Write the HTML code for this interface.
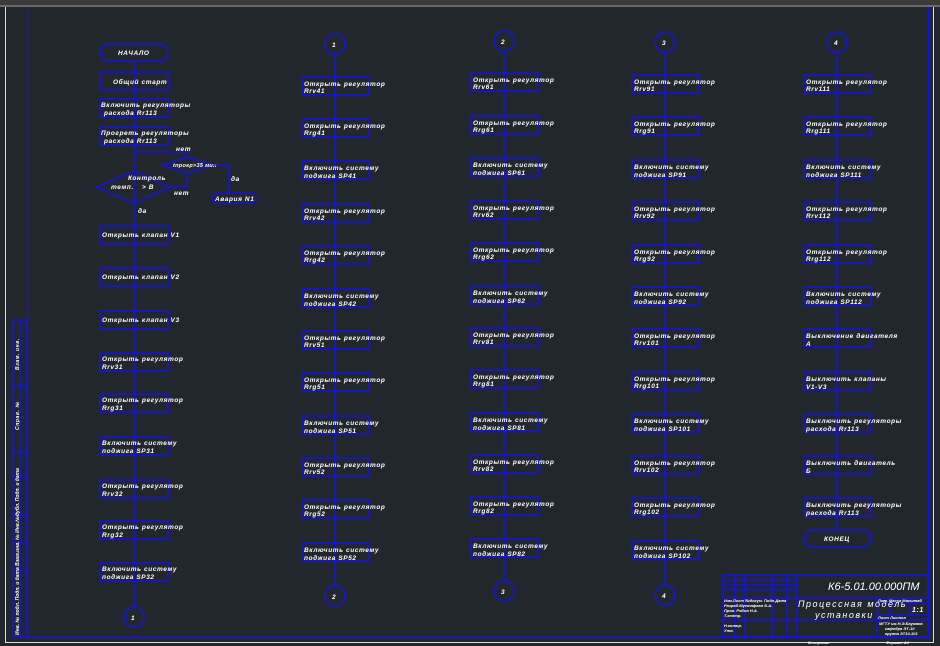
<!DOCTYPE html><html><head><meta charset="utf-8"><style>
html,body{margin:0;padding:0;background:#22272e;width:940px;height:646px;overflow:hidden}
svg{display:block}
text{font-family:"Liberation Sans",sans-serif;font-style:italic;font-weight:bold;fill:#fff;font-size:6.5px;letter-spacing:0.6px}
.b{fill:none;stroke:#1010ff;stroke-width:1.3}
.l{stroke:#1010ff;stroke-width:1.3}
</style></head><body>
<svg width="940" height="646" viewBox="0 0 940 646">
<rect x="0" y="0" width="940" height="5" fill="#3a3a3a"/><rect x="0" y="5" width="940" height="2" fill="#6a6a6a"/>
<line x1="5.5" y1="7" x2="5.5" y2="643" stroke="#ddd"/><line x1="5" y1="642.5" x2="934" y2="642.5" stroke="#ddd"/><line x1="933.5" y1="7" x2="933.5" y2="643" stroke="#ddd"/>
<line x1="27.5" y1="7" x2="27.5" y2="637" class="l"/><line x1="27" y1="637.5" x2="928" y2="637.5" class="l"/><line x1="928.5" y1="7" x2="928.5" y2="637" class="l"/>
<rect x="13" y="320" width="14" height="317" class="b"/><line x1="20" y1="320" x2="20" y2="637" class="l"/>
<line x1="13" y1="386" x2="27" y2="386" class="l"/><line x1="13" y1="452" x2="27" y2="452" class="l"/><line x1="13" y1="477" x2="27" y2="477" class="l"/><line x1="13" y1="515" x2="27" y2="515" class="l"/><line x1="13" y1="543" x2="27" y2="543" class="l"/><line x1="13" y1="570" x2="27" y2="570" class="l"/>
<text transform="translate(19,370) rotate(-90)" style="font-size:5px">Взам. инв.</text>
<text transform="translate(19,430) rotate(-90)" style="font-size:5px">Справ. №</text>
<text transform="translate(19,635) rotate(-90)" style="font-size:5px;letter-spacing:0">Инв. № подл. Подп. и дата Взам.инв. № Инв.№дубл. Подп. и дата</text>

<line x1="134" y1="62" x2="134" y2="606" class="l"/>
<rect x="100" y="44" width="68" height="17" rx="8.5" class="b" fill="#22272e"/><text x="118" y="55">НАЧАЛО</text>
<rect x="100" y="72" width="68" height="18" class="b" fill="#22272e"/><text x="113" y="84">Общий старт</text>
<rect x="100" y="99" width="68" height="18" class="b" fill="#22272e"/><text x="101" y="107">Включить регуляторы</text><text x="104" y="115">расхода Rr113</text>
<rect x="100" y="127" width="68" height="18" class="b" fill="#22272e"/><text x="101" y="135">Прогреть регуляторы</text><text x="104" y="143">расхода Rr113</text>
<polyline points="134,152 187,152 187,158" class="b"/>
<polygon points="162,165 187,157 213,165 187,173" class="b" fill="#22272e"/><text x="173" y="167" style="font-size:5.5px;letter-spacing:0.3px">tпрогр&gt;35 мин</text>
<text x="176" y="151">нет</text>
<polyline points="213,165 229,165 229,193" class="b"/><text x="231" y="181">да</text>
<rect x="212" y="193" width="44" height="10" rx="5" class="b"/><text x="215" y="201">Авария N1</text>
<polygon points="96,187 134,171 170,187 134,203" class="b" fill="#22272e"/><text x="128" y="180">Контроль</text><text x="111" y="189">темп.</text><text x="142" y="189">&gt; В</text>
<polyline points="170,187 187,187 187,173" class="b"/><text x="174" y="195">нет</text><text x="138" y="213">да</text>
<g fill="#22272e">
<rect x="100" y="226" width="68" height="18" class="b"/><rect x="100" y="268" width="68" height="18" class="b"/><rect x="100" y="311" width="68" height="18" class="b"/><rect x="100" y="353" width="68" height="18" class="b"/><rect x="100" y="394" width="68" height="18" class="b"/><rect x="100" y="437" width="68" height="18" class="b"/><rect x="100" y="480" width="68" height="18" class="b"/><rect x="100" y="521" width="68" height="18" class="b"/><rect x="100" y="563" width="68" height="18" class="b"/>
</g>
<text x="102" y="237">Открыть клапан V1</text><text x="102" y="279">Открыть клапан V2</text><text x="102" y="322">Открыть клапан V3</text>
<text x="102" y="361">Открыть регулятор</text><text x="102" y="369">Rrv31</text>
<text x="102" y="402">Открыть регулятор</text><text x="102" y="410">Rrg31</text>
<text x="102" y="445">Включить систему</text><text x="102" y="453">поджига SP31</text>
<text x="102" y="488">Открыть регулятор</text><text x="102" y="496">Rrv32</text>
<text x="102" y="529">Открыть регулятор</text><text x="102" y="537">Rrg32</text>
<text x="102" y="571">Включить систему</text><text x="102" y="579">поджига SP32</text>
<circle cx="134" cy="617" r="10" class="b" fill="#22272e"/><text x="131" y="620">1</text>

<line x1="335" y1="54" x2="335" y2="586" class="l"/>
<circle cx="335" cy="44" r="10" class="b"/><text x="332" y="47">1</text>
<circle cx="335" cy="596" r="10" class="b" fill="#22272e"/><text x="332" y="599">2</text>
<g fill="#22272e">
<rect x="302" y="77" width="67" height="18" class="b"/><rect x="302" y="119" width="67" height="18" class="b"/><rect x="302" y="161" width="67" height="18" class="b"/><rect x="302" y="204" width="67" height="18" class="b"/><rect x="302" y="246" width="67" height="18" class="b"/><rect x="302" y="289" width="67" height="18" class="b"/><rect x="302" y="331" width="67" height="18" class="b"/><rect x="302" y="373" width="67" height="18" class="b"/><rect x="302" y="416" width="67" height="18" class="b"/><rect x="302" y="458" width="67" height="18" class="b"/><rect x="302" y="500" width="67" height="18" class="b"/><rect x="302" y="543" width="67" height="18" class="b"/>
</g>
<text x="304" y="86">Открыть регулятор</text><text x="304" y="93">Rrv41</text>
<text x="304" y="128">Открыть регулятор</text><text x="304" y="135">Rrg41</text>
<text x="304" y="170">Включить систему</text><text x="304" y="178">поджига SP41</text>
<text x="304" y="213">Открыть регулятор</text><text x="304" y="220">Rrv42</text>
<text x="304" y="255">Открыть регулятор</text><text x="304" y="262">Rrg42</text>
<text x="304" y="298">Включить систему</text><text x="304" y="306">поджига SP42</text>
<text x="304" y="340">Открыть регулятор</text><text x="304" y="347">Rrv51</text>
<text x="304" y="382">Открыть регулятор</text><text x="304" y="389">Rrg51</text>
<text x="304" y="425">Включить систему</text><text x="304" y="433">поджига SP51</text>
<text x="304" y="467">Открыть регулятор</text><text x="304" y="474">Rrv52</text>
<text x="304" y="509">Открыть регулятор</text><text x="304" y="516">Rrg52</text>
<text x="304" y="552">Включить систему</text><text x="304" y="560">поджига SP52</text>

<line x1="504" y1="51" x2="504" y2="581" class="l"/>
<circle cx="504" cy="41" r="10" class="b"/><text x="501" y="44">2</text>
<circle cx="504" cy="591" r="10" class="b" fill="#22272e"/><text x="501" y="594">3</text>
<g fill="#22272e">
<rect x="471" y="73" width="67" height="18" class="b"/><rect x="471" y="116" width="67" height="18" class="b"/><rect x="471" y="158" width="67" height="18" class="b"/><rect x="471" y="201" width="67" height="18" class="b"/><rect x="471" y="243" width="67" height="18" class="b"/><rect x="471" y="286" width="67" height="18" class="b"/><rect x="471" y="328" width="67" height="18" class="b"/><rect x="471" y="370" width="67" height="18" class="b"/><rect x="471" y="413" width="67" height="18" class="b"/><rect x="471" y="455" width="67" height="18" class="b"/><rect x="471" y="497" width="67" height="18" class="b"/><rect x="471" y="539" width="67" height="18" class="b"/>
</g>
<text x="473" y="82">Открыть регулятор</text><text x="473" y="89">Rrv61</text>
<text x="473" y="125">Открыть регулятор</text><text x="473" y="132">Rrg61</text>
<text x="473" y="167">Включить систему</text><text x="473" y="175">поджига SP61</text>
<text x="473" y="210">Открыть регулятор</text><text x="473" y="217">Rrv62</text>
<text x="473" y="252">Открыть регулятор</text><text x="473" y="259">Rrg62</text>
<text x="473" y="295">Включить систему</text><text x="473" y="303">поджига SP62</text>
<text x="473" y="337">Открыть регулятор</text><text x="473" y="344">Rrv81</text>
<text x="473" y="379">Открыть регулятор</text><text x="473" y="386">Rrg81</text>
<text x="473" y="422">Включить систему</text><text x="473" y="430">поджига SP81</text>
<text x="473" y="464">Открыть регулятор</text><text x="473" y="471">Rrv82</text>
<text x="473" y="506">Открыть регулятор</text><text x="473" y="513">Rrg82</text>
<text x="473" y="548">Включить систему</text><text x="473" y="556">поджига SP82</text>

<line x1="665" y1="52" x2="665" y2="585" class="l"/>
<circle cx="665" cy="42" r="10" class="b"/><text x="662" y="45">3</text>
<circle cx="665" cy="595" r="10" class="b" fill="#22272e"/><text x="662" y="598">4</text>
<g fill="#22272e">
<rect x="632" y="75" width="67" height="18" class="b"/><rect x="632" y="117" width="67" height="18" class="b"/><rect x="632" y="160" width="67" height="18" class="b"/><rect x="632" y="202" width="67" height="18" class="b"/><rect x="632" y="245" width="67" height="18" class="b"/><rect x="632" y="287" width="67" height="18" class="b"/><rect x="632" y="329" width="67" height="18" class="b"/><rect x="632" y="372" width="67" height="18" class="b"/><rect x="632" y="414" width="67" height="18" class="b"/><rect x="632" y="456" width="67" height="18" class="b"/><rect x="632" y="498" width="67" height="18" class="b"/><rect x="632" y="541" width="67" height="18" class="b"/>
</g>
<text x="634" y="84">Открыть регулятор</text><text x="634" y="91">Rrv91</text>
<text x="634" y="126">Открыть регулятор</text><text x="634" y="133">Rrg91</text>
<text x="634" y="169">Включить систему</text><text x="634" y="177">поджига SP91</text>
<text x="634" y="211">Открыть регулятор</text><text x="634" y="218">Rrv92</text>
<text x="634" y="254">Открыть регулятор</text><text x="634" y="261">Rrg92</text>
<text x="634" y="296">Включить систему</text><text x="634" y="304">поджига SP92</text>
<text x="634" y="338">Открыть регулятор</text><text x="634" y="345">Rrv101</text>
<text x="634" y="381">Открыть регулятор</text><text x="634" y="388">Rrg101</text>
<text x="634" y="423">Включить систему</text><text x="634" y="431">поджига SP101</text>
<text x="634" y="465">Открыть регулятор</text><text x="634" y="472">Rrv102</text>
<text x="634" y="507">Открыть регулятор</text><text x="634" y="514">Rrg102</text>
<text x="634" y="550">Включить систему</text><text x="634" y="558">поджига SP102</text>

<line x1="837" y1="52" x2="837" y2="530" class="l"/>
<circle cx="837" cy="42" r="10" class="b"/><text x="834" y="45">4</text>
<g fill="#22272e">
<rect x="804" y="75" width="67" height="18" class="b"/><rect x="804" y="117" width="67" height="18" class="b"/><rect x="804" y="160" width="67" height="18" class="b"/><rect x="804" y="202" width="67" height="18" class="b"/><rect x="804" y="245" width="67" height="18" class="b"/><rect x="804" y="287" width="67" height="18" class="b"/><rect x="804" y="329" width="67" height="18" class="b"/><rect x="804" y="372" width="67" height="18" class="b"/><rect x="804" y="414" width="67" height="18" class="b"/><rect x="804" y="456" width="67" height="18" class="b"/><rect x="804" y="498" width="67" height="18" class="b"/>
<rect x="804" y="530" width="67" height="17" rx="8.5" class="b"/>
</g>
<text x="806" y="84">Открыть регулятор</text><text x="806" y="91">Rrv111</text>
<text x="806" y="126">Открыть регулятор</text><text x="806" y="133">Rrg111</text>
<text x="806" y="169">Включить систему</text><text x="806" y="177">поджига SP111</text>
<text x="806" y="211">Открыть регулятор</text><text x="806" y="218">Rrv112</text>
<text x="806" y="254">Открыть регулятор</text><text x="806" y="261">Rrg112</text>
<text x="806" y="296">Включить систему</text><text x="806" y="304">поджига SP112</text>
<text x="806" y="338">Выключение двигателя</text><text x="806" y="346">А</text>
<text x="806" y="381">Выключить клапаны</text><text x="806" y="389">V1-V3</text>
<text x="806" y="423">Выключить регуляторы</text><text x="806" y="431">расхода Rr113</text>
<text x="806" y="465">Выключить двигатель</text><text x="806" y="473">Б</text>
<text x="806" y="507">Выключить регуляторы</text><text x="806" y="515">расхода Rr113</text>
<text x="824" y="541">КОНЕЦ</text>

<rect x="723" y="575" width="205" height="62" class="b" fill="#22272e"/>
<line x1="723" y1="580" x2="797" y2="580" class="l"/><line x1="723" y1="585" x2="797" y2="585" class="l"/><line x1="723" y1="590" x2="797" y2="590" class="l"/>
<line x1="723" y1="598" x2="928" y2="598" class="l"/><line x1="723" y1="620" x2="928" y2="620" class="l"/>
<line x1="735" y1="575" x2="735" y2="637" class="l"/><line x1="745" y1="575" x2="745" y2="637" class="l"/><line x1="772" y1="575" x2="772" y2="637" class="l"/><line x1="787" y1="575" x2="787" y2="637" class="l"/><line x1="797" y1="575" x2="797" y2="637" class="l"/>
<line x1="877" y1="598" x2="877" y2="637" class="l"/><line x1="877" y1="603" x2="928" y2="603" class="l"/><line x1="877" y1="615" x2="928" y2="615" class="l"/><line x1="890" y1="598" x2="890" y2="615" class="l"/><line x1="910" y1="598" x2="910" y2="615" class="l"/>
<text x="828" y="590" style="font-size:11px;font-weight:normal;letter-spacing:0">К6-5.01.00.000ПМ</text>
<text x="798" y="607" style="font-size:9px;font-weight:normal;letter-spacing:1.5px">Процессная модель</text>
<text x="815" y="618" style="font-size:9px;font-weight:normal;letter-spacing:1.5px">установки</text>
<text x="912" y="612" style="font-size:7px">1:1</text>
<text x="878" y="602" style="font-size:4px;letter-spacing:0">Лит. Масса Масштаб</text>
<text x="878" y="619" style="font-size:4px;letter-spacing:0">Лист   Листов</text>
<text x="879" y="625" style="font-size:4px;letter-spacing:0">МГТУ им.Н.Э.Баумана</text><text x="885" y="630" style="font-size:4px;letter-spacing:0">кафедра ЭТ-10</text><text x="885" y="635" style="font-size:4px;letter-spacing:0">группа ЭТ10-101</text>
<text x="724" y="602" style="font-size:4px;letter-spacing:0">Изм.Лист №докум. Подп.Дата</text>
<text x="724" y="607" style="font-size:4px;letter-spacing:0">Разраб.Мустафаев Б.А.</text><text x="724" y="612" style="font-size:4px;letter-spacing:0">Пров. Рябов Н.А.</text><text x="724" y="617" style="font-size:4px;letter-spacing:0">Т.контр.</text>
<text x="724" y="627" style="font-size:4px;letter-spacing:0">Н.контр.</text><text x="724" y="632" style="font-size:4px;letter-spacing:0">Утв.</text>
<text x="808" y="644" style="font-size:4px;letter-spacing:0">Копировал</text><text x="886" y="644" style="font-size:4px;letter-spacing:0">Формат А1</text>
</svg>
</body></html>
